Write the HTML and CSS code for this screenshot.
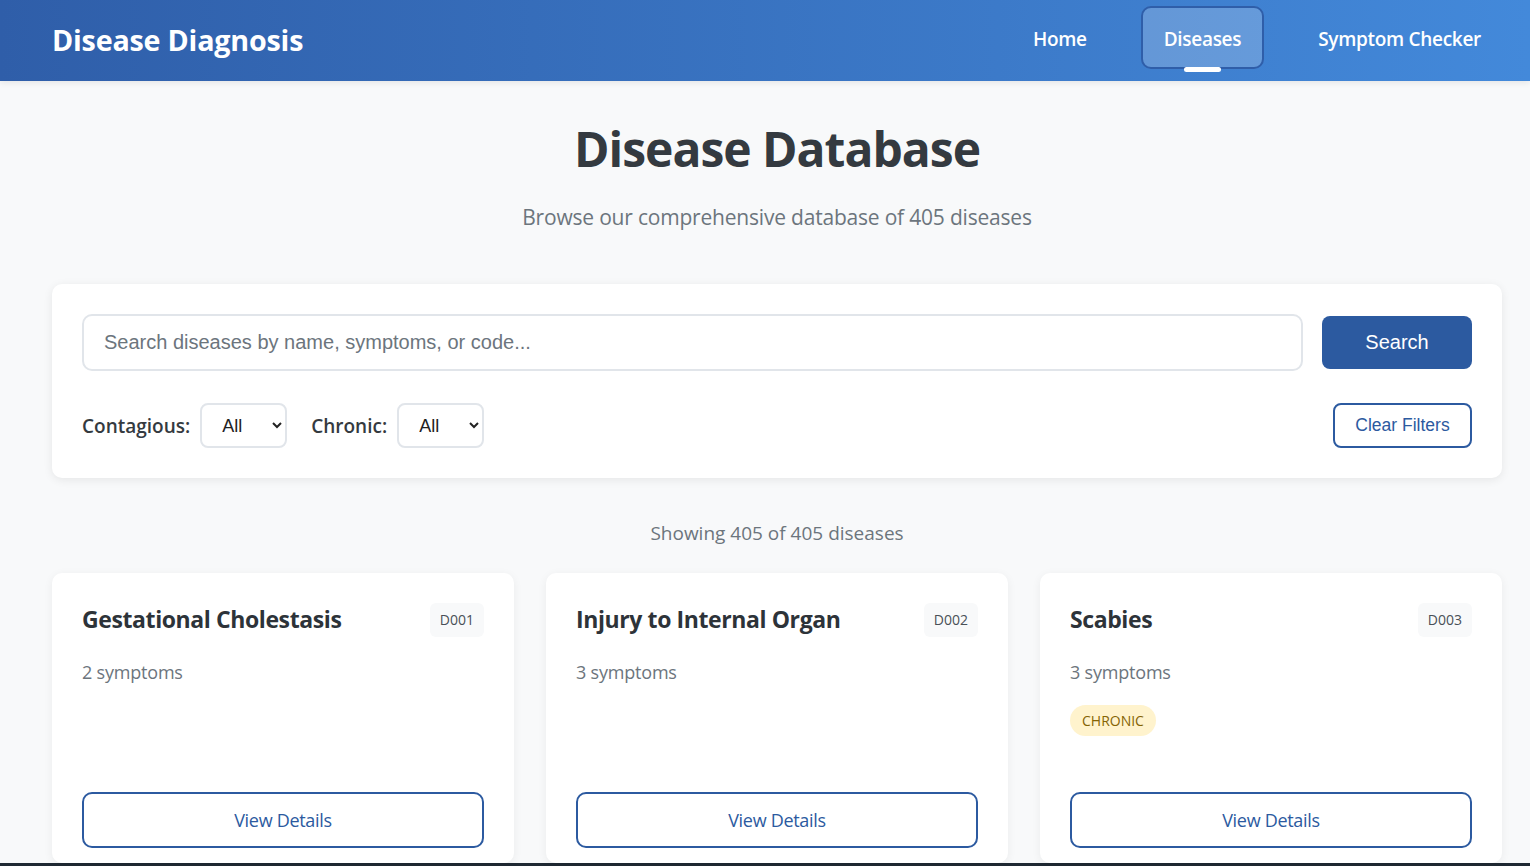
FILE: index.html
```html
<!DOCTYPE html>
<html lang="en">
<head>
    <meta charset="UTF-8">
    <meta name="viewport" content="width=device-width, initial-scale=1.0">
    <title>Disease Diagnosis</title>
    <link rel="stylesheet" href="styles.css">
</head>
<body>
    <!-- 頂部導航 -->
    <header class="topbar">
        <div class="container topbar-inner">
            <a href="#" class="brand">Disease Diagnosis</a>
            <nav class="nav">
                <a href="#" class="nav-link">Home</a>
                <a href="#" class="nav-link active">Diseases</a>
                <a href="#" class="nav-link">Symptom Checker</a>
            </nav>
        </div>
    </header>

    <main class="container">
        <div class="page-head">
            <h1>Disease Database</h1>
            <p>Browse our comprehensive database of 405 diseases</p>
        </div>

        <!-- 搜尋與篩選 -->
        <section class="search-panel">
            <div class="search-row">
                <input type="text" class="search-input" placeholder="Search diseases by name, symptoms, or code...">
                <button class="btn-primary">Search</button>
            </div>
            <div class="filter-row">
                <div class="filters">
                    <label>Contagious:</label>
                    <select class="filter-select"><option>All</option><option>Yes</option><option>No</option></select>
                    <label>Chronic:</label>
                    <select class="filter-select"><option>All</option><option>Yes</option><option>No</option></select>
                </div>
                <button class="btn-outline">Clear Filters</button>
            </div>
        </section>

        <p class="result-count">Showing 405 of 405 diseases</p>

        <!-- 疾病列表 -->
        <div class="card-grid">
            <div class="card">
                <div class="card-head">
                    <h3>Gestational Cholestasis</h3>
                    <span class="code">D001</span>
                </div>
                <p class="symptoms">2 symptoms</p>
                <a href="#" class="btn-details">View Details</a>
            </div>
            <div class="card">
                <div class="card-head">
                    <h3>Injury to Internal Organ</h3>
                    <span class="code">D002</span>
                </div>
                <p class="symptoms">3 symptoms</p>
                <a href="#" class="btn-details">View Details</a>
            </div>
            <div class="card">
                <div class="card-head">
                    <h3>Scabies</h3>
                    <span class="code">D003</span>
                </div>
                <p class="symptoms">3 symptoms</p>
                <div class="tags"><span class="tag-chronic">CHRONIC</span></div>
                <a href="#" class="btn-details">View Details</a>
            </div>
        </div>
    </main>

    <footer class="footer"></footer>
</body>
</html>
```

FILE: styles.css
```css
* {
    margin: 0;
    padding: 0;
    box-sizing: border-box;
}
body {
    font-family: "Open Sans", "Noto Sans", sans-serif;
    background-color: #f8f9fa;
    color: #343a40;
}
a {
    text-decoration: none;
}
.container {
    width: 1450px;
    margin: 0 28px 0 52px;
}

/* 頂部導航 */
.topbar {
    height: 81px;
    background: linear-gradient(90deg, #2f5ea9, #4389da);
    box-shadow: 0 2px 6px rgba(0, 0, 0, 0.08);
}
.topbar-inner {
    height: 100%;
    display: flex;
    align-items: center;
    justify-content: space-between;
}
.brand {
    color: #fff;
    font-size: 28.7px;
    font-weight: 700;
    letter-spacing: -0.2px;
    margin-top: -3px;
}
.nav {
    display: flex;
    gap: 31px;
    margin-right: -2px;
    margin-top: -6px;
}
.nav-link {
    position: relative;
    color: #fff;
    font-size: 19px;
    font-weight: 600;
    line-height: 25px;
    padding: 19px 21px 15px;
    border: 2px solid transparent;
    border-radius: 10px;
    letter-spacing: -0.3px;
}
.nav-link.active {
    background-color: rgba(255, 255, 255, 0.2);
    border-color: #2f5ea9;
}
.nav-link.active::after {
    content: "";
    position: absolute;
    left: 50%;
    bottom: -5px;
    width: 37px;
    height: 5px;
    margin-left: -18px;
    border-radius: 3px;
    background-color: #fff;
}

/* 標題 */
.page-head {
    text-align: center;
    padding: 38px 0 53px;
}
.page-head h1 {
    font-size: 48px;
    font-weight: 700;
    line-height: 60px;
    color: #343a40;
    letter-spacing: -1px;
}
.page-head p {
    margin-top: 24px;
    font-size: 21px;
    color: #6c757d;
    letter-spacing: -0.2px;
}

/* 搜尋與篩選 */
.search-panel {
    background-color: #fff;
    border-radius: 10px;
    box-shadow: 0 2px 10px rgba(0, 0, 0, 0.08);
    padding: 30px;
}
.search-row {
    display: flex;
    align-items: center;
    gap: 19px;
}
.search-input {
    flex: 1;
    height: 57px;
    border: 2px solid #e1e5ea;
    border-radius: 10px;
    padding: 0 20px;
    font-family: "Liberation Sans", Arial, sans-serif;
    font-size: 20px;
    color: #343a40;
}
.search-input::placeholder {
    color: #6c757d;
}
.btn-primary {
    width: 150px;
    height: 53px;
    border: none;
    border-radius: 8px;
    background-color: #2c5aa0;
    color: #fff;
    font-family: "Liberation Sans", Arial, sans-serif;
    font-size: 20px;
}
.filter-row {
    display: flex;
    align-items: center;
    justify-content: space-between;
    margin-top: 32px;
}
.filters {
    display: flex;
    align-items: center;
}
.filters label {
    font-size: 19px;
    font-weight: 600;
    color: #343a40;
    margin-right: 10px;
}
.filter-select {
    width: 87px;
    height: 45px;
    border: 2px solid #e1e5ea;
    border-radius: 8px;
    background-color: #fff;
    padding: 0 0 0 16px;
    font-family: "Liberation Sans", Arial, sans-serif;
    font-size: 18px;
    color: #222;
    margin-right: 24px;
}
.btn-outline {
    width: 139px;
    height: 45px;
    border: 2px solid #2c5aa0;
    border-radius: 8px;
    background-color: #fff;
    color: #2c5aa0;
    font-family: "Liberation Sans", Arial, sans-serif;
    font-size: 17.5px;
}

.result-count {
    text-align: center;
    font-size: 19px;
    color: #6c757d;
    padding: 42px 0 27px;
}

/* 疾病卡片 */
.card-grid {
    display: grid;
    grid-template-columns: repeat(3, 1fr);
    gap: 32px;
}
.card {
    display: flex;
    flex-direction: column;
    min-height: 290px;
    background-color: #fff;
    border-radius: 10px;
    box-shadow: 0 2px 10px rgba(0, 0, 0, 0.06);
    padding: 30px 30px 15px;
}
.card-head {
    display: flex;
    justify-content: space-between;
    align-items: flex-start;
}
.card-head h3 {
    font-size: 23px;
    font-weight: 700;
    line-height: 33px;
    color: #2d3339;
    letter-spacing: -0.4px;
}
.code {
    background-color: #f8f9fa;
    border-radius: 6px;
    padding: 0 10px;
    line-height: 34px;
    font-size: 14px;
    color: #495057;
}
.symptoms {
    margin-top: 23px;
    font-size: 18px;
    line-height: 24px;
    color: #6c757d;
    letter-spacing: -0.2px;
}
.tags {
    margin-top: 21px;
    display: flex;
}
.tag-chronic {
    background-color: #fff3cd;
    color: #856404;
    font-size: 14px;
    line-height: 31px;
    padding: 0 12px;
    border-radius: 16px;
}
.btn-details {
    margin-top: auto;
    height: 56px;
    border: 2px solid #2c5aa0;
    border-radius: 10px;
    color: #2c5aa0;
    font-size: 18px;
    display: flex;
    align-items: center;
    justify-content: center;
    letter-spacing: -0.3px;
}

.footer {
    height: 40px;
    background-color: #1f2933;
}
```
